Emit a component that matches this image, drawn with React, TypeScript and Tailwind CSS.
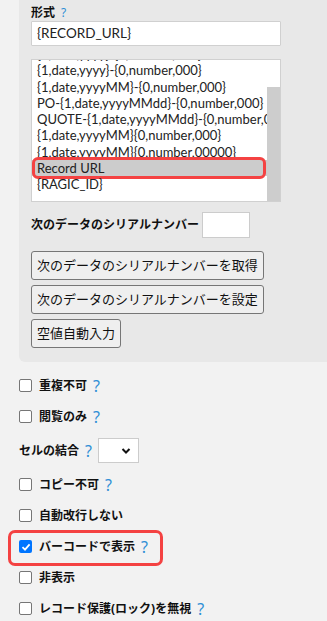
import { useEffect, useRef } from "react";

const font = { fontFamily: '"Noto Sans", "Noto Sans CJK JP", sans-serif' };
const latin = { fontFamily: 'Lato, "Noto Sans CJK JP", sans-serif' };

const formats = [
  "{0,date,yyyy}-{0,number,000}",
  "{1,date,yyyy}-{0,number,000}",
  "{1,date,yyyyMM}-{0,number,000}",
  "PO-{1,date,yyyyMMdd}-{0,number,000}",
  "QUOTE-{1,date,yyyyMMdd}-{0,number,000}",
  "{1,date,yyyyMM}{0,number,000}",
  "{1,date,yyyyMM}{0,number,00000}",
  "Record URL",
  "{RAGIC_ID}",
];

function Help() {
  return <span className="ml-1.5 font-normal text-[#2f8fd6]">?</span>;
}

function Check({ label, help, checked }: { label: string; help?: boolean; checked?: boolean }) {
  return (
    <div className="flex items-center h-[31px]">
      {checked ? (
        <span className="w-[13px] h-[13px] rounded-[2px] bg-[#0075ff] flex items-center justify-center">
          <svg width="10" height="10" viewBox="0 0 10 10">
            <path d="M1.5 5.2 L4 7.6 L8.6 2.4" stroke="white" strokeWidth="1.8" fill="none" />
          </svg>
        </span>
      ) : (
        <span className="w-[13px] h-[13px] rounded-[2px] border border-[#767676] bg-white" />
      )}
      <span className="ml-[7px] text-[12px] font-bold text-[#111]">{label}</span>
      {help && <Help />}
    </div>
  );
}

export default function App() {
  const listRef = useRef<HTMLDivElement>(null);
  useEffect(() => {
    if (listRef.current) listRef.current.scrollTop = 15;
  }, []);

  return (
    <div className="w-[327px] h-[621px] overflow-hidden bg-[#f2f2f2] text-[#111]" style={font}>
      {/* settings panel */}
      <div className="ml-[19px] bg-[#e8e8e8] rounded-bl-md pl-3 pb-[14px] pt-[5px]">
        <div className="text-[12px] font-bold h-[16px] flex items-center">
          形式<Help />
        </div>
        <div
          className="w-[250px] h-[25px] bg-white border border-[#d0d0d0] rounded-[1px] px-[5px] flex items-center text-[13.5px] text-[#222]"
          style={latin}
        >
          {"{RECORD_URL}"}
        </div>

        <div className="mt-[13px] w-[250px] h-[143px] bg-white border border-[#d0d0d0] flex">
          <div ref={listRef} className="flex-1 overflow-hidden [scrollbar-width:none]">
            <div className="pt-[1px] pb-[24px]" style={latin}>
              {formats.map((f) => (
                <div
                  key={f}
                  className={`relative h-[16.3px] leading-[16.3px] pl-[5px] whitespace-nowrap text-[13px] text-[#222] ${
                    f === "Record URL" ? "bg-[#cccccc]" : ""
                  }`}
                >
                  {f}
                  {f === "Record URL" && (
                    <div className="absolute left-0 top-[-3px] w-[234px] h-[22px] border-[3px] border-[#f44242] rounded-[6px] pointer-events-none" />
                  )}
                </div>
              ))}
            </div>
          </div>
          <div className="w-[13px] flex flex-col">
            <div className="h-[27px] bg-white" />
            <div className="flex-1 bg-[#cdcdcd]" />
          </div>
        </div>

        <div className="mt-[10px] flex items-center">
          <span className="text-[12px] font-bold">次のデータのシリアルナンバー</span>
          <span className="ml-[3px] w-[48px] h-[26px] bg-white border border-[#cccccc]" />
        </div>

        <div className="mt-[13px] flex flex-col items-start gap-[5px]">
          <button className="h-[29px] px-[5px] text-[13px] bg-[#efefef] border border-[#767676] rounded-[3px] text-[#111]">
            次のデータのシリアルナンバーを取得
          </button>
          <button className="h-[29px] px-[5px] text-[13px] bg-[#efefef] border border-[#767676] rounded-[3px] text-[#111]">
            次のデータのシリアルナンバーを設定
          </button>
          <button className="h-[29px] px-[5px] text-[13px] bg-[#efefef] border border-[#767676] rounded-[3px] text-[#111]">
            空値自動入力
          </button>
        </div>
      </div>

      {/* options */}
      <div className="pl-[19px] pt-[8px]">
        <Check label="重複不可" help />
        <Check label="閲覧のみ" help />
        <div className="flex items-center h-[37px]">
          <span className="text-[12px] font-bold">セルの結合</span>
          <Help />
          <div className="ml-[6px] w-[41px] h-[25px] bg-white border border-[#cccccc] flex items-center justify-end pr-[7px]">
            <svg width="10" height="8" viewBox="0 0 10 8">
              <path d="M1.5 2 L5 5.5 L8.5 2" stroke="#111" strokeWidth="2" fill="none" />
            </svg>
          </div>
        </div>
        <Check label="コピー不可" help />
        <Check label="自動改行しない" />
        <div className="relative">
          <Check label="バーコードで表示" help checked />
          <div className="absolute left-[-11px] top-[-1px] w-[155px] h-[36px] border-[3px] border-[#f44242] rounded-[7px] pointer-events-none" />
        </div>
        <Check label="非表示" />
        <Check label="レコード保護(ロック)を無視" help />
      </div>
    </div>
  );
}
